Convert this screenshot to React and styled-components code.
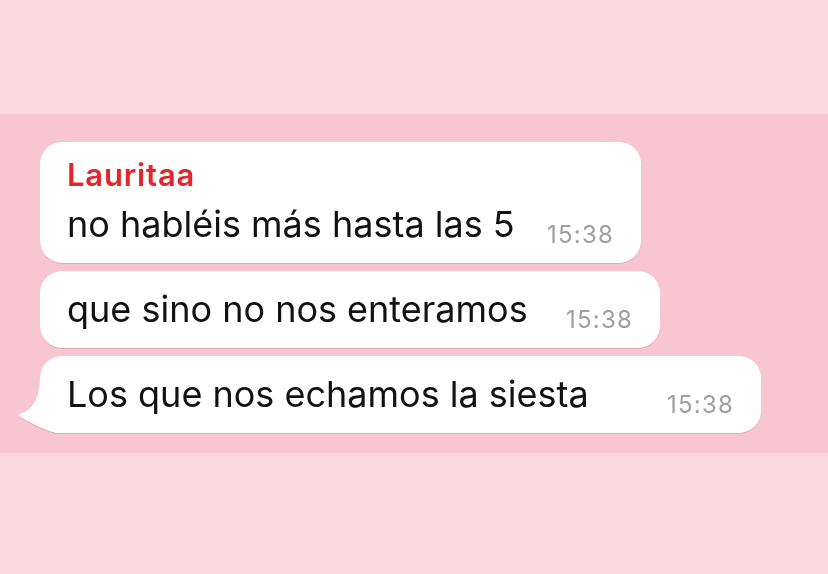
import styled, { createGlobalStyle } from "styled-components";

const GlobalStyle = createGlobalStyle`
  html, body {
    margin: 0;
    padding: 0;
    background: #fad9de;
  }
  body {
    font-family: Inter, "Noto Sans", "Liberation Sans", sans-serif;
    -webkit-font-smoothing: antialiased;
  }
`;

const Page = styled.div`
  display: flex;
  flex-direction: column;
  width: 828px;
  height: 574px;
  background: #fad9de;
`;

const Band = styled.div`
  height: 114px;
  flex-shrink: 0;
`;

const Chat = styled.section`
  display: flex;
  flex-direction: column;
  align-items: flex-start;
  gap: 8px;
  padding: 28px 0 20px 40px;
  background: #f8c6d0;
`;

const Bubble = styled.div`
  position: relative;
  box-sizing: border-box;
  width: ${(p) => p.w}px;
  padding: 18px 27px 19px 27px;
  background: #fff;
  border-radius: 22px;
  filter: drop-shadow(0 1.5px 0.5px rgba(214, 140, 158, 0.55));
`;

const Name = styled.div`
  color: #e3262b;
  font-weight: 600;
  font-size: 31px;
  line-height: 29px;
  letter-spacing: 0.8px;
  margin-bottom: 15px;
`;

const Row = styled.div`
  display: flex;
  align-items: flex-end;
`;

const Text = styled.span`
  color: #111;
  font-size: 36px;
  line-height: 40px;
  white-space: nowrap;
`;

const Time = styled.span`
  margin-left: auto;
  color: #a0a0a4;
  font-size: 24px;
  line-height: 18px;
  letter-spacing: 1.2px;
`;

const Tail = styled.svg`
  position: absolute;
  left: -26px;
  bottom: 0;
  width: 50px;
  height: 58px;
`;

const messages = [
  { name: "Lauritaa", text: "no habléis más hasta las 5", time: "15:38", w: 601 },
  { text: "que sino no nos enteramos", time: "15:38", w: 620 },
  { text: "Los que nos echamos la siesta", time: "15:38", w: 721, tail: true },
];

export default function App() {
  return (
    <Page>
      <GlobalStyle />
      <Band />
      <Chat>
        {messages.map((m, i) => (
          <Bubble key={i} w={m.w}>
            {m.tail && (
              <Tail viewBox="0 0 50 58">
                <path
                  d="M26 0 C26 20 21 34 6 39 C4 39.8 4 41.2 6 42 C16 47 27 54 42 58 L50 58 L50 0 Z"
                  fill="#fff"
                />
              </Tail>
            )}
            {m.name && <Name>{m.name}</Name>}
            <Row>
              <Text>{m.text}</Text>
              <Time>{m.time}</Time>
            </Row>
          </Bubble>
        ))}
      </Chat>
    </Page>
  );
}
